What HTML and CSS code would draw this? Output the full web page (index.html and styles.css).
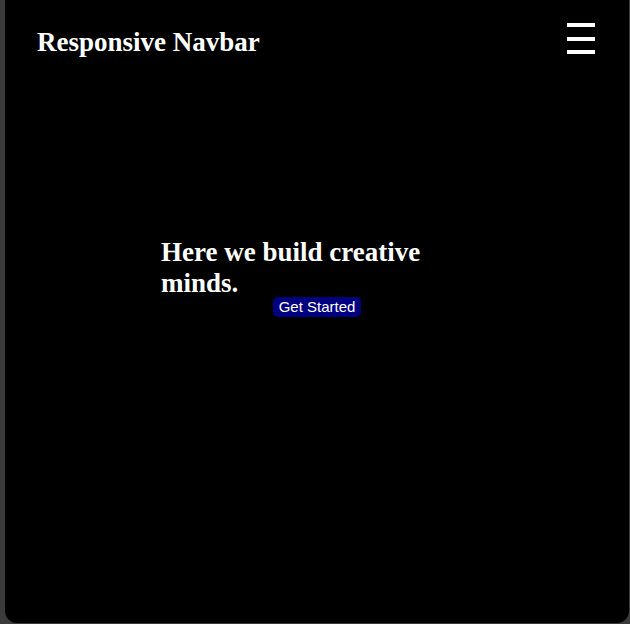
FILE: index.html
```html
<!DOCTYPE html>
<html lang="en">
<head>
<meta charset="utf-8">
<title>Responsive Navbar</title>
<link rel="stylesheet" href="styles.css">
</head>
<body>
<div class="frame">
  <nav class="nav">
    <div class="brand">Responsive Navbar</div>
    <div class="burger" aria-label="menu">
      <span class="bar"></span>
      <span class="bar"></span>
      <span class="bar"></span>
    </div>
  </nav>
  <section class="hero">
    <h1 class="hero-title">Here we build creative minds.</h1>
    <button class="cta">Get Started</button>
  </section>
</div>
</body>
</html>
```
FILE: styles.css
```css
html, body {
  margin: 0;
  padding: 0;
  height: 100%;
}
body {
  background: #3b3b3b;
  overflow: hidden;
}
.frame {
  box-sizing: border-box;
  margin: 0 1px 0 5px;
  height: 623px;
  background: #000;
  border-radius: 0 0 12px 12px;
  color: #fff;
}
.nav {
  display: flex;
  justify-content: space-between;
  align-items: flex-start;
  padding: 23px 34px 0 32px;
}
.brand {
  margin-top: 4px;
  font-family: "Liberation Serif", "Times New Roman", serif;
  font-weight: bold;
  font-size: 27px;
  line-height: 31px;
}
.burger {
  display: flex;
  flex-direction: column;
  gap: 9.5px;
  width: 28px;
}
.bar {
  display: block;
  height: 4px;
  background: #fff;
}
.hero {
  width: 50%;
  margin: 179px auto 0;
  display: flex;
  flex-direction: column;
  align-items: center;
}
.hero-title {
  align-self: stretch;
  margin: 0;
  font-family: "Liberation Serif", "Times New Roman", serif;
  font-weight: bold;
  font-size: 27px;
  line-height: 31px;
}
.cta {
  margin: -2px 0 0;
  border: none;
  border-radius: 5px;
  background: #000080;
  color: #fff;
  font-family: "Liberation Sans", Arial, sans-serif;
  font-size: 15px;
  line-height: 18px;
  padding: 1px 6px;
}
```
